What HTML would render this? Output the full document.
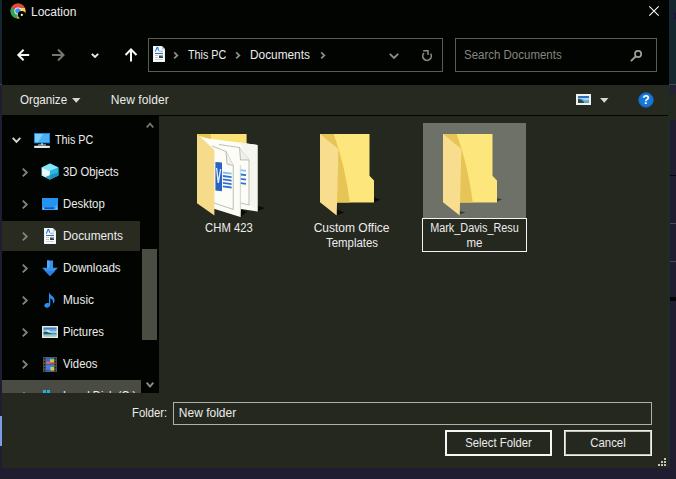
<!DOCTYPE html>
<html lang="en">
<head>
<meta charset="utf-8">
<title>Location</title>
<style>
html,body{margin:0;padding:0;}
body{width:676px;height:479px;overflow:hidden;background:#211d31;position:relative;
  font-family:"Liberation Sans",sans-serif;font-size:12px;color:#fff;}
.abs{position:absolute;}
.t{position:absolute;white-space:nowrap;line-height:14px;height:14px;color:#ececec;}
#dlg{left:2px;top:0;width:667px;height:467.6px;background:#25281f;}
#top{left:2px;top:0;width:667px;height:85px;background:#020402;}
#tool{left:2px;top:85px;width:667px;height:30px;background:#26291f;}
#line{left:2px;top:115px;width:667px;height:1px;background:#020402;}
#tree{left:2px;top:115px;width:157px;height:278px;background:#020402;overflow:hidden;}
.box{position:absolute;box-sizing:border-box;border:1px solid #5b5c52;}
svg{position:absolute;overflow:visible;}
.row{position:absolute;left:0;width:139px;height:30px;}
</style>
</head>
<body>
<!-- background strips left & right -->
<div class="abs" style="left:0;top:0;width:2px;height:84px;background:#14272e"></div>
<div class="abs" style="left:0;top:84px;width:2px;height:1px;background:#3a4a50"></div>
<div class="abs" style="left:0;top:416px;width:2px;height:30px;background:#7c9ce8"></div>
<div class="abs" style="left:669px;top:0;width:7px;height:84px;background:#14272e"></div>
<div class="abs" style="left:669px;top:84px;width:7px;height:1px;background:#3a4a50"></div>
<div class="abs" style="left:669px;top:85px;width:7px;height:9px;background:#251f33"></div>
<div class="abs" style="left:669px;top:94px;width:7px;height:26px;background:#25281f"></div>
<div class="abs" style="left:669px;top:175px;width:7px;height:1px;background:#05050a"></div>
<div class="abs" style="left:669px;top:223px;width:7px;height:1px;background:#4a4560"></div>
<div class="abs" style="left:669px;top:261px;width:7px;height:1px;background:#4a4560"></div>
<div class="abs" style="left:669px;top:297px;width:7px;height:4px;background:#05050a"></div>

<div class="abs" style="left:674px;top:13px;width:2px;height:6px;background:#181238"></div>
<div id="dlg" class="abs"></div>
<div id="top" class="abs"></div>
<div id="tool" class="abs"></div>
<div id="line" class="abs"></div>
<div class="abs" style="left:668px;top:85px;width:2px;height:382.6px;background:#1f2b27"></div>

<!-- title -->
<svg style="left:10px;top:3px" width="16" height="16" viewBox="0 0 16 16">
  <circle cx="8" cy="8" r="7.5" fill="#dd4b3e"/>
  <path d="M8 8 L1.5 4.2 A7.5 7.5 0 0 0 7.2 15.45 L10.5 9.8 Z" fill="#2da94f"/>
  <path d="M8 8 L7.2 15.45 A7.5 7.5 0 0 0 14.9 5 L8 5 Z" fill="#fdd142"/>
  <path d="M8 8 L1.5 4.2 A7.5 7.5 0 0 1 14.9 5 L8 5 Z" fill="#dd4b3e"/>
  <circle cx="8" cy="8" r="3.6" fill="#fff"/>
  <circle cx="8" cy="8" r="2.8" fill="#4a8af4"/>
  <circle cx="11.7" cy="11.7" r="3.8" fill="#020402"/>
  <circle cx="11.8" cy="11.9" r="1.1" fill="#fff"/>
</svg>
<div class="t" style="left:31px;top:5px;">Location</div>
<svg style="left:649px;top:6px" width="10" height="10" viewBox="0 0 10 10"><path d="M0.3 0.3 L9.7 9.7 M9.7 0.3 L0.3 9.7" stroke="#f4f4f4" stroke-width="1.15" fill="none"/></svg>

<!-- nav arrows -->
<svg style="left:16px;top:48px" width="14" height="14" viewBox="0 0 14 14"><path d="M13.2 7 H2.6 M7.6 1.8 L2.3 7 L7.6 12.2" stroke="#f6f6f6" stroke-width="2" fill="none"/></svg>
<svg style="left:51px;top:48px" width="14" height="14" viewBox="0 0 14 14"><path d="M1 7 H12 M7 1.5 L12.5 7 L7 12.5" stroke="#77786f" stroke-width="2" fill="none"/></svg>
<svg style="left:90.5px;top:52.6px" width="8" height="6" viewBox="0 0 8 6"><path d="M0.8 0.8 L4 4 L7.2 0.8" stroke="#ececec" stroke-width="1.9" fill="none"/></svg>
<svg style="left:124px;top:48px" width="14" height="14" viewBox="0 0 14 14"><path d="M7 13.5 V2 M1.5 7 L7 1.5 L12.5 7" stroke="#f6f6f6" stroke-width="2" fill="none"/></svg>

<!-- address box -->
<div class="box" style="left:148px;top:38px;width:295px;height:34px;"></div>
<svg style="left:153px;top:46px" width="12" height="16" viewBox="0 0 12 16">
  <path d="M0 0 H9 L12 3 V16 H0 Z" fill="#dff1f8"/>
  <path d="M0.8 0.8 H8.6 L11.2 3.4 V15.2 H0.8 Z" fill="#fefefe"/>
  <path d="M8.6 0.4 V3.6 H11.8 Z" fill="#c9c6bd"/>
  <path d="M2.3 5.6 L4 1.6 H4.8 L5.6 4.6" stroke="#1b74c9" stroke-width="1.1" fill="none"/>
  <rect x="6" y="4.7" width="4" height="1" fill="#7fb2e0"/>
  <rect x="2" y="6.9" width="8" height="1" fill="#2a64a8"/>
  <rect x="2" y="9" width="3" height="0.9" fill="#b8bcc0"/>
  <rect x="2" y="11" width="3" height="0.9" fill="#b8bcc0"/>
  <rect x="6" y="8.8" width="4" height="1" fill="#8fa0e0"/>
  <path d="M6 9.8 H10 V12 H6 Z" fill="#2e4a3a"/>
  <path d="M6 9.8 H10 V10.6 Z" fill="#a9c8a0"/>
  <rect x="2" y="13" width="8" height="0.9" fill="#c4c8cc"/>
</svg>
<svg style="left:173px;top:51px" width="6" height="9" viewBox="0 0 6 9"><path d="M1.2 1.4 L4.3 4.4 L1.2 7.4" stroke="#8c8d84" stroke-width="1.8" fill="none"/></svg>
<div class="t" style="left:188px;top:47.5px;transform:scaleX(.895);transform-origin:0 0;">This PC</div>
<svg style="left:235px;top:51px" width="6" height="9" viewBox="0 0 6 9"><path d="M1.2 1.4 L4.3 4.4 L1.2 7.4" stroke="#8c8d84" stroke-width="1.8" fill="none"/></svg>
<div class="t" style="left:249.7px;top:47.5px;transform:scaleX(.987);transform-origin:0 0;">Documents</div>
<svg style="left:320px;top:51px" width="6" height="9" viewBox="0 0 6 9"><path d="M1.2 1.4 L4.3 4.4 L1.2 7.4" stroke="#8c8d84" stroke-width="1.8" fill="none"/></svg>
<svg style="left:389px;top:53px" width="10" height="7" viewBox="0 0 10 7"><path d="M0.8 0.8 L5 5 L9.2 0.8" stroke="#8c8d84" stroke-width="1.9" fill="none"/></svg>
<svg style="left:421px;top:49px" width="12" height="13" viewBox="0 0 12 13">
  <path d="M3 4 A4.3 4.3 0 1 0 9.6 4.6" stroke="#8c8d84" stroke-width="1.6" fill="none"/>
  <path d="M2.2 1.7 H7 V6" stroke="#8c8d84" stroke-width="1.5" fill="none"/>
</svg>

<!-- search box -->
<div class="box" style="left:455px;top:38px;width:202px;height:34px;"></div>
<div class="t" style="left:464px;top:47.5px;color:#85867c;transform:scaleX(.957);transform-origin:0 0;">Search Documents</div>
<svg style="left:630px;top:49px" width="13" height="13" viewBox="0 0 13 13"><circle cx="8.1" cy="5" r="3.1" stroke="#a1a297" stroke-width="1.7" fill="none"/><path d="M5.9 7.2 L0.9 12.1" stroke="#a1a297" stroke-width="1.9"/></svg>

<!-- toolbar -->
<div class="t" style="left:19.5px;top:92.7px;transform:scaleX(.967);transform-origin:0 0;">Organize</div>
<svg style="left:72px;top:98px" width="8.5" height="4.7" viewBox="0 0 9 5"><path d="M0 0 H9 L4.5 5 Z" fill="#d8d8d2"/></svg>
<div class="t" style="left:110.7px;top:92.7px;letter-spacing:.08px;">New folder</div>
<svg style="left:576px;top:94px" width="15" height="11" viewBox="0 0 15 11">
  <rect x="0" y="0" width="15" height="11" fill="#f1f1ec"/>
  <rect x="2" y="2" width="11" height="7" fill="#a9d6ee"/>
  <rect x="2" y="2" width="11" height="2" fill="#2d6fc0"/>
  <path d="M2 4.5 L6 5 L9 6.5 L13 6 V9 H2 Z" fill="#5fa7c8"/>
  <path d="M2 5 L5 5.5 L8 8 L8 9 H2 Z" fill="#2c4a4a"/>
</svg>
<svg style="left:600.4px;top:98px" width="8.5" height="4.7" viewBox="0 0 9 5"><path d="M0 0 H9 L4.5 5 Z" fill="#d8d8d2"/></svg>
<svg style="left:638px;top:92px" width="16" height="16" viewBox="0 0 16 16"><circle cx="8" cy="8" r="7.6" fill="#1777d8"/><circle cx="8" cy="8" r="7.2" fill="none" stroke="#0d5cb4" stroke-width="0.8"/></svg>
<div class="t" style="left:638px;top:93px;width:16px;text-align:center;font-weight:bold;font-size:12px;color:#fff;">?</div>

<!-- left tree -->
<div id="tree" class="abs">
  <div class="abs" style="left:0;top:106px;width:138px;height:30px;background:#292b21"></div>
  <div class="abs" style="left:0;top:265px;width:139px;height:30px;background:#4a4c43"></div>
  <!-- scrollbar -->
  <svg style="left:144px;top:7px" width="8" height="6" viewBox="0 0 8 6"><path d="M0.7 5.5 L4 1.6 L7.3 5.5" stroke="#74756c" stroke-width="1.9" fill="none"/></svg>
  <div class="abs" style="left:140px;top:134px;width:15px;height:91px;background:#4a4d42"></div>
  <svg style="left:144px;top:267px" width="8" height="6" viewBox="0 0 8 6"><path d="M0.7 0.6 L4 4.5 L7.3 0.6" stroke="#8c8d84" stroke-width="1.9" fill="none"/></svg>
</div>

<!-- tree chevrons -->
<svg style="left:12px;top:137px" width="9" height="6" viewBox="0 0 9 6"><path d="M0.7 0.8 L4.5 4.8 L8.3 0.8" stroke="#d8d8d2" stroke-width="1.9" fill="none"/></svg>
<svg style="left:22px;top:168px" width="6" height="9" viewBox="0 0 6 9"><path d="M0.8 0.7 L4.8 4.5 L0.8 8.3" stroke="#84857c" stroke-width="1.8" fill="none"/></svg>
<svg style="left:22px;top:200px" width="6" height="9" viewBox="0 0 6 9"><path d="M0.8 0.7 L4.8 4.5 L0.8 8.3" stroke="#84857c" stroke-width="1.8" fill="none"/></svg>
<svg style="left:22px;top:232px" width="6" height="9" viewBox="0 0 6 9"><path d="M0.8 0.7 L4.8 4.5 L0.8 8.3" stroke="#84857c" stroke-width="1.8" fill="none"/></svg>
<svg style="left:22px;top:264px" width="6" height="9" viewBox="0 0 6 9"><path d="M0.8 0.7 L4.8 4.5 L0.8 8.3" stroke="#84857c" stroke-width="1.8" fill="none"/></svg>
<svg style="left:22px;top:296px" width="6" height="9" viewBox="0 0 6 9"><path d="M0.8 0.7 L4.8 4.5 L0.8 8.3" stroke="#84857c" stroke-width="1.8" fill="none"/></svg>
<svg style="left:22px;top:328px" width="6" height="9" viewBox="0 0 6 9"><path d="M0.8 0.7 L4.8 4.5 L0.8 8.3" stroke="#84857c" stroke-width="1.8" fill="none"/></svg>
<svg style="left:22px;top:360px" width="6" height="9" viewBox="0 0 6 9"><path d="M0.8 0.7 L4.8 4.5 L0.8 8.3" stroke="#84857c" stroke-width="1.8" fill="none"/></svg>

<!-- tree icons -->
<!-- This PC -->
<svg style="left:34px;top:133px" width="16" height="15" viewBox="0 0 16 15">
  <rect x="0" y="0" width="16" height="10.3" fill="#2183e2"/>
  <rect x="1" y="1" width="14" height="8.3" fill="#4bb3f5"/>
  <path d="M1 1 H9 L4 9.3 H1 Z" fill="#79d0fb"/>
  <rect x="7" y="10.3" width="2" height="1.5" fill="#c5cfe6"/>
  <rect x="4" y="11.5" width="8" height="0.9" fill="#e6ecf1"/>
  <rect x="0" y="12.8" width="16" height="2.1" rx="1" fill="#e2eaef"/>
</svg>
<!-- 3D Objects -->
<svg style="left:41px;top:163px" width="18" height="17" viewBox="0 0 18 17">
  <path d="M9 0.6 L17.4 4.4 V12.6 L9 16.6 L0.7 12.6 V4.4 Z" fill="#2ab6e2"/>
  <path d="M9 0.6 L17.4 4.4 L9 8 L0.7 4.4 Z" fill="#86e6f7"/>
  <path d="M0.7 4.4 L9 8 V16.6 L0.7 12.6 Z" fill="#d2f6fb"/>
  <path d="M9 8 L17.4 4.4 V12.6 L9 16.6 Z" fill="#2ab6e2"/>
  <path d="M9 12 L17.4 9.5 V12.6 L9 16.6 L4 14.2 Z" fill="#178fb8" opacity=".85"/>
  <path d="M2 5.6 L7.6 8.4 V13 L2 11 Z" fill="#f2fdfe" opacity=".8"/>
</svg>
<!-- Desktop -->
<svg style="left:42px;top:198px" width="16" height="12" viewBox="0 0 16 12">
  <rect x="0" y="0" width="16" height="12" fill="#2394f2"/>
  <rect x="0" y="11" width="16" height="1" fill="#3aa4f8"/>
  <rect x="1" y="9.6" width="14" height="1.1" fill="#0c3f8f"/>
  <rect x="1" y="9.6" width="1.2" height="1.1" fill="#e8f2ff"/>
  <rect x="12.4" y="9.6" width="1.2" height="1.1" fill="#e8f2ff"/>
  <rect x="14" y="9.6" width="1" height="1.1" fill="#e8f2ff"/>
  <path d="M12.5 9 L15 6.5 V9 Z" fill="#58b2fa"/>
</svg>
<!-- Documents -->
<svg style="left:44px;top:228px" width="12" height="16" viewBox="0 0 12 16">
  <path d="M0 0 H9 L12 3 V16 H0 Z" fill="#dff1f8"/>
  <path d="M0.8 0.8 H8.6 L11.2 3.4 V15.2 H0.8 Z" fill="#fefefe"/>
  <path d="M8.6 0.4 V3.6 H11.8 Z" fill="#c9c6bd"/>
  <path d="M2.3 5.6 L4 1.6 H4.8 L5.6 4.6" stroke="#1b74c9" stroke-width="1.1" fill="none"/>
  <rect x="6" y="4.7" width="4" height="1" fill="#7fb2e0"/>
  <rect x="2" y="6.9" width="8" height="1" fill="#2a64a8"/>
  <rect x="2" y="9" width="3" height="0.9" fill="#b8bcc0"/>
  <rect x="2" y="11" width="3" height="0.9" fill="#b8bcc0"/>
  <rect x="6" y="8.8" width="4" height="1" fill="#8fa0e0"/>
  <path d="M6 9.8 H10 V12 H6 Z" fill="#2e4a3a"/>
  <path d="M6 9.8 H10 V10.6 Z" fill="#a9c8a0"/>
  <rect x="2" y="13" width="8" height="0.9" fill="#c4c8cc"/>
</svg>
<!-- Downloads -->
<svg style="left:42px;top:260px" width="16" height="16" viewBox="0 0 16 16">
  <path d="M5 0.5 H11 V7.8 H15.9 L8 15.9 L0.1 7.8 H5 Z" fill="#3791ee"/>
  <path d="M5 0.5 H7.5 V7.8 H5 Z" fill="#58a9f6"/>
  <path d="M3 11 L8 15.9 L13 11 Z" fill="#2a7fdc"/>
</svg>
<!-- Music -->
<svg style="left:44px;top:292px" width="12" height="16" viewBox="0 0 12 16">
  <path d="M5 0.3 C6 3.5 10.8 4.6 10.6 8.6 C10.5 10.3 9.7 11.3 8.8 12 C9.6 9.6 8.6 7.2 6.3 6.2 V12.6 C6.3 14.6 4.6 15.8 2.9 15.8 C1.4 15.8 0.3 14.9 0.3 13.6 C0.3 12.1 1.7 10.9 3.4 10.9 C4 10.9 4.6 11 5 11.3 Z" fill="#2c8ef2"/>
</svg>
<!-- Pictures -->
<svg style="left:42px;top:326px" width="16" height="12" viewBox="0 0 16 12">
  <rect x="0" y="0" width="16" height="12" fill="#ebe9da"/>
  <rect x="1.5" y="1.5" width="13" height="9" fill="#9fd2ec"/>
  <rect x="1.5" y="1.5" width="13" height="2.2" fill="#3f80d4"/>
  <path d="M1.5 3.6 H14.5 V5 L8 5.6 L1.5 5 Z" fill="#6aaae4"/>
  <path d="M2.5 5 L6 4 L9 5.5 L6 6.2 Z" fill="#e6f4fa"/>
  <path d="M1.5 6 L4.5 5.4 L8 7 L11 7.6 L14.5 7.2 V8.4 L1.5 8.8 Z" fill="#2c5a50"/>
  <path d="M1.5 8.6 L14.5 8.2 V10.5 H1.5 Z" fill="#8cc6dc"/>
</svg>
<!-- Videos -->
<svg style="left:43px;top:357px" width="14" height="15" viewBox="0 0 14 15">
  <rect x="0" y="0" width="14" height="15" fill="#55564b"/>
  <g fill="#1c1d18"><rect x="0.8" y="1" width="1.4" height="1.4"/><rect x="0.8" y="4" width="1.4" height="1.4"/><rect x="0.8" y="7" width="1.4" height="1.4"/><rect x="0.8" y="10" width="1.4" height="1.4"/><rect x="0.8" y="13" width="1.4" height="1.2"/>
  <rect x="11.8" y="1" width="1.4" height="1.4"/><rect x="11.8" y="4" width="1.4" height="1.4"/><rect x="11.8" y="7" width="1.4" height="1.4"/><rect x="11.8" y="10" width="1.4" height="1.4"/><rect x="11.8" y="13" width="1.2" height="1.2"/></g>
  <rect x="3" y="0.8" width="8" height="6.4" fill="#3568d4"/>
  <rect x="7" y="2.2" width="4" height="3.4" fill="#c4cf34"/>
  <rect x="3" y="4.6" width="4" height="2.2" fill="#e06a62"/>
  <rect x="7" y="5.6" width="4" height="1.6" fill="#d04040"/>
  <rect x="3" y="7.8" width="8" height="6.4" fill="#3b80e2"/>
  <rect x="7.4" y="10" width="3.6" height="3.4" fill="#e2c232"/>
  <rect x="3" y="12.6" width="4.4" height="1.6" fill="#2f5fc0"/>
</svg>
<!-- Local Disk (clipped) -->
<div class="abs" style="left:2px;top:389px;width:139px;height:4px;overflow:hidden;">
  <div class="t" style="left:61px;top:0px;transform:scaleX(.931);transform-origin:0 0;">Local Disk (C:)</div>
  <div class="abs" style="left:41px;top:1px;width:3px;height:4px;background:#1fb0e8"></div>
  <div class="abs" style="left:45px;top:1px;width:3px;height:4px;background:#1fb0e8"></div>
  <div class="abs" style="left:21px;top:2.5px;width:2px;height:2px;background:#3a8be0"></div>
</div>

<!-- tree labels -->
<div class="t" style="left:55px;top:132.6px;transform:scaleX(0.896);transform-origin:0 0;">This PC</div>
<div class="t" style="left:63px;top:164.6px;transform:scaleX(0.936);transform-origin:0 0;">3D Objects</div>
<div class="t" style="left:62.6px;top:196.6px;transform:scaleX(0.949);transform-origin:0 0;">Desktop</div>
<div class="t" style="left:62.6px;top:228.6px;transform:scaleX(0.987);transform-origin:0 0;">Documents</div>
<div class="t" style="left:62.6px;top:260.6px;transform:scaleX(0.972);transform-origin:0 0;">Downloads</div>
<div class="t" style="left:62.6px;top:292.6px;transform:scaleX(0.987);transform-origin:0 0;">Music</div>
<div class="t" style="left:62.6px;top:324.6px;transform:scaleX(0.942);transform-origin:0 0;">Pictures</div>
<div class="t" style="left:63px;top:356.6px;transform:scaleX(0.942);transform-origin:0 0;">Videos</div>

<!-- main items -->
<div class="abs" style="left:423px;top:123px;width:103px;height:95px;background:#6d7167"></div>
<div class="abs" style="left:422px;top:218px;width:105px;height:34px;box-sizing:border-box;border:1px solid #f4f4f4;background:#25281f"></div>

<!-- folder 1 with docs -->
<svg style="left:196px;top:133px" width="70" height="86" viewBox="0 0 70 86">
  <path d="M61.5 72.6 L68.8 75 L61.5 78.5 Z" fill="#0b0c09"/>
  <path d="M44.4 76 L51 79 L44.4 84 Z" fill="#0b0c09"/>
  <path d="M1 1 H50.6 V30 H1 Z" fill="#fbe277"/>
  <path d="M1 1 H15 V10 H1 Z" fill="#e9c64c"/>
  <!-- sheets (union) -->
  <path d="M3 3 L12 5.5 L61.5 12 V78.5 L45 76 L44.4 84 L18 75.7 V17 Z" fill="#fdfdf8"/>
  <path d="M53 27 V72 L61.5 78.5 V12 L43.5 9.6 Z" fill="#f6f6f0"/>
  <!-- doc 2 outline -->
  <path d="M23 11.5 L43.5 14.5 L53 27 V72 L44.4 70" stroke="#a3a39a" stroke-width="0.7" fill="none"/>
  <path d="M43.5 14.5 L44.5 27 L53 27" stroke="#a3a39a" stroke-width="0.7" fill="#f1f1eb"/>
  <path d="M44.4 32 V84" stroke="#c4c4bc" stroke-width="0.7" fill="none"/>
  <path d="M44.8 36.2 L50 36.9 V38.7 L44.8 38 Z" fill="#7fc0f6"/>
  <path d="M44.8 40.6 L50 41.3 V43.1 L44.8 42.4 Z M44.8 45 L50 45.7 V47.5 L44.8 46.8 Z M44.8 49.2 L50 49.9 V51.7 L44.8 51 Z" fill="#2f6fd0"/>
  <!-- doc 1 outline -->
  <path d="M16 13 L30 18.5 L37.25 32.5 V76.4 L18 70" stroke="#a3a39a" stroke-width="0.7" fill="none"/>
  <path d="M30 18.5 L31 31 L37.25 32.5" stroke="#a3a39a" stroke-width="0.7" fill="#f1f1eb"/>
  <path d="M19.4 29 L26 29.6 V58.3 L19.4 57.5 Z" fill="#2a63c4"/>
  <path d="M20.6 35 L22.3 50 L24.6 36" stroke="#e6eefc" stroke-width="1.3" fill="none"/>
  <path d="M26.9 38.6 L35.6 39.8 V41.6 L26.9 40.4 Z" fill="#7fc0f6"/>
  <path d="M26.9 42.1 L35.6 43.3 V45.1 L26.9 43.9 Z M26.9 45.5 L35.6 46.7 V48.5 L26.9 47.3 Z M26.9 49 L35.6 50.2 V52 L26.9 50.8 Z M26.9 52.4 L35.6 53.6 V55.4 L26.9 54.2 Z" fill="#2f6fd0"/>
  <!-- front flap -->
  <path d="M1 1 L18.4 17 V82.4 L1 70.2 Z" fill="#f6db8b"/>
</svg>

<!-- folder 2 -->
<svg style="left:319px;top:133px" width="64" height="86" viewBox="0 0 64 86">
  <path d="M17.7 76.6 L25.3 79.2 L17.7 82.4 Z" fill="#0b0c09"/>
  <path d="M55 64.3 L61.2 66.7 L55 69.5 Z" fill="#0b0c09"/>
  <path d="M1 1.1 H50.5 V42.7 L55 47.4 V69.5 H17.7 L1 50 Z" fill="#fde67c"/>
  <path d="M1 1.1 H14.7 Q26 32 30.8 69.5 H17.7 V16 Z" fill="#e7c456"/>
  <path d="M1 1.1 L19.4 16 L17.7 82.4 L1 69.3 Z" fill="#f8dd8e"/>
</svg>

<!-- folder 3 -->
<svg style="left:442px;top:133px" width="64" height="86" viewBox="0 0 64 86">
  <path d="M17.7 78 L23.5 79.6 L17.7 81.4 Z" fill="#3b3d31"/>
  <path d="M55 65 L60.2 66.6 L55 68.4 Z" fill="#3b3d31"/>
  <path d="M1 1.1 H50.5 V42.7 L55 47.4 V69.5 H17.7 L1 50 Z" fill="#fde67c"/>
  <path d="M1 1.1 H14.7 Q26 32 30.8 69.5 H17.7 V16 Z" fill="#e7c456"/>
  <path d="M1 1.1 L19.4 16 L17.7 82.4 L1 69.3 Z" fill="#f8dd8e"/>
</svg>

<div class="t" style="left:176.5px;top:220.5px;width:104px;text-align:center;transform:scaleX(.943);">CHM 423</div>
<div class="t" style="left:299.6px;top:220.5px;width:104px;text-align:center;">Custom Office</div>
<div class="t" style="left:299.7px;top:235.6px;width:104px;text-align:center;transform:scaleX(.952);">Templates</div>
<div class="t" style="left:421.5px;top:220.8px;width:105px;text-align:center;transform:scaleX(.904);">Mark_Davis_Resu</div>
<div class="t" style="left:422px;top:235.5px;width:105px;text-align:center;transform:scaleX(.96);">me</div>

<!-- bottom -->
<div class="t" style="left:131.7px;top:406px;transform:scaleX(.939);transform-origin:0 0;">Folder:</div>
<div class="box" style="left:173px;top:402px;width:479px;height:23px;border-color:#b0b1a6;"></div>
<div class="t" style="left:178.8px;top:405.5px;">New folder</div>
<div class="abs" style="left:445px;top:430px;width:107px;height:26px;box-sizing:border-box;border:2px solid #f6f6f6;"></div>
<div class="t" style="left:445.3px;top:435.7px;width:107px;text-align:center;transform:scaleX(.939);">Select Folder</div>
<div class="abs" style="left:564px;top:430px;width:88px;height:26px;box-sizing:border-box;border:1px solid #f2f2ec;box-shadow:inset 0 0 0 1px #c2c2b9;"></div>
<div class="t" style="left:563.7px;top:435.7px;width:88px;text-align:center;transform:scaleX(.947);">Cancel</div>
<svg style="left:658px;top:458px" width="9" height="9" viewBox="0 0 9 9" fill="#c4c4bc">
  <rect x="6" y="0" width="2" height="2"/><rect x="3" y="3" width="2" height="2"/><rect x="6" y="3" width="2" height="2"/>
  <rect x="0" y="6" width="2" height="2"/><rect x="3" y="6" width="2" height="2"/><rect x="6" y="6" width="2" height="2"/>
</svg>
</body>
</html>
